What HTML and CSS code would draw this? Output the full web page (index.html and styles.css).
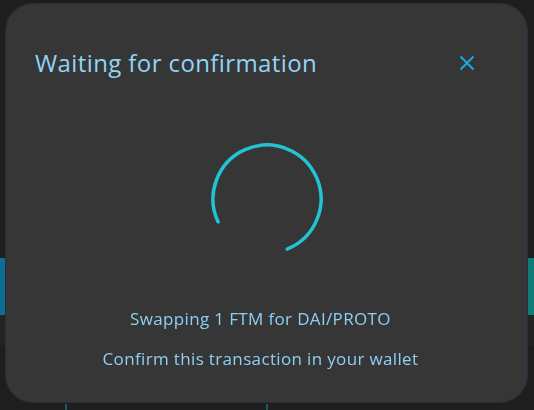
FILE: index.html
```html
<!DOCTYPE html>
<html lang="en">
<head>
<meta charset="utf-8">
<title>Waiting for confirmation</title>
<link rel="stylesheet" href="styles.css">
</head>
<body>
<div class="page">
  <div class="page-top"></div>
  <div class="page-row">
    <div class="edge-btn edge-left"></div>
    <div class="edge-btn edge-right"></div>
  </div>
  <div class="page-lower">
    <div class="tick tick-a"></div>
    <div class="tick tick-b"></div>
  </div>
</div>

<div class="modal" role="dialog" aria-labelledby="modal-title">
  <div class="modal-header">
    <h2 id="modal-title" class="modal-title">Waiting for confirmation</h2>
    <button class="close-btn" aria-label="Close">
      <svg width="16" height="16" viewBox="0 0 16 16" aria-hidden="true">
        <path d="M1.5 1.5 L14.5 14.5 M14.5 1.5 L1.5 14.5" stroke="#1ba6e6" stroke-width="2" fill="none"/>
      </svg>
    </button>
  </div>
  <div class="spinner-wrap">
    <svg class="spinner" width="120" height="120" viewBox="0 0 120 120" aria-hidden="true">
      <path d="M11.06 82.82 A54 54 0 1 1 80.23 110.07" stroke="#22c3d3" stroke-width="3.5" stroke-linecap="round" fill="none"/>
    </svg>
  </div>
  <div class="modal-body">
    <p class="modal-text swap">Swapping 1 FTM for DAI/PROTO</p>
    <p class="modal-text confirm">Confirm this transaction in your wallet</p>
  </div>
</div>
</body>
</html>
```

FILE: styles.css
```css
* { box-sizing: border-box; }

html, body {
  margin: 0;
  padding: 0;
  width: 534px;
  height: 410px;
  overflow: hidden;
  background: #1f1f1f;
  font-family: "Open Sans", "Noto Sans", sans-serif;
}

.page {
  width: 534px;
  height: 410px;
  display: flex;
  flex-direction: column;
}

.page-top {
  height: 258px;
  background: #1e1e1f;
}

.page-row {
  height: 88px;
  display: flex;
  justify-content: space-between;
  align-items: flex-start;
  background: #232323;
}

.edge-btn {
  height: 57px;
}

.edge-left {
  width: 5px;
  background: #0b6f93;
}

.edge-right {
  width: 6px;
  background: #0f7d76;
}

.page-lower {
  flex: 1;
  background: #1e1e1f;
  display: flex;
  align-items: flex-end;
  padding-left: 65px;
  gap: 199px;
}

.tick {
  width: 2px;
  height: 6px;
  background: #0f5f5a;
}

.modal {
  position: fixed;
  left: 5px;
  top: 3px;
  width: 523px;
  height: 400px;
  background: #363636;
  border: 1px solid #2a2a44;
  border-radius: 28px;
  display: flex;
  flex-direction: column;
  align-items: center;
}

.modal-header {
  width: 100%;
  display: flex;
  justify-content: space-between;
  align-items: center;
  padding: 44px 52px 0 29px;
}

.modal-title {
  margin: 0;
  font-size: 24px;
  font-weight: 400;
  line-height: 30px;
  color: #92d4f8;
  letter-spacing: 0.4px;
}

.close-btn {
  background: none;
  border: 0;
  padding: 0;
  width: 16px;
  height: 16px;
  display: flex;
  cursor: pointer;
}

.spinner-wrap {
  margin-top: 61px;
  width: 120px;
  height: 120px;
  margin-left: 1px;
}

.spinner {
  display: block;
}

.modal-body {
  width: 100%;
  padding-right: 12px;
  display: flex;
  flex-direction: column;
  align-items: center;
}

.modal-text {
  margin: 0;
  font-size: 17px;
  line-height: 22px;
  color: #8ecff4;
  text-align: center;
  letter-spacing: 0.35px;
}

.swap {
  margin-top: 49px;
}

.confirm {
  margin-top: 18px;
}
```
